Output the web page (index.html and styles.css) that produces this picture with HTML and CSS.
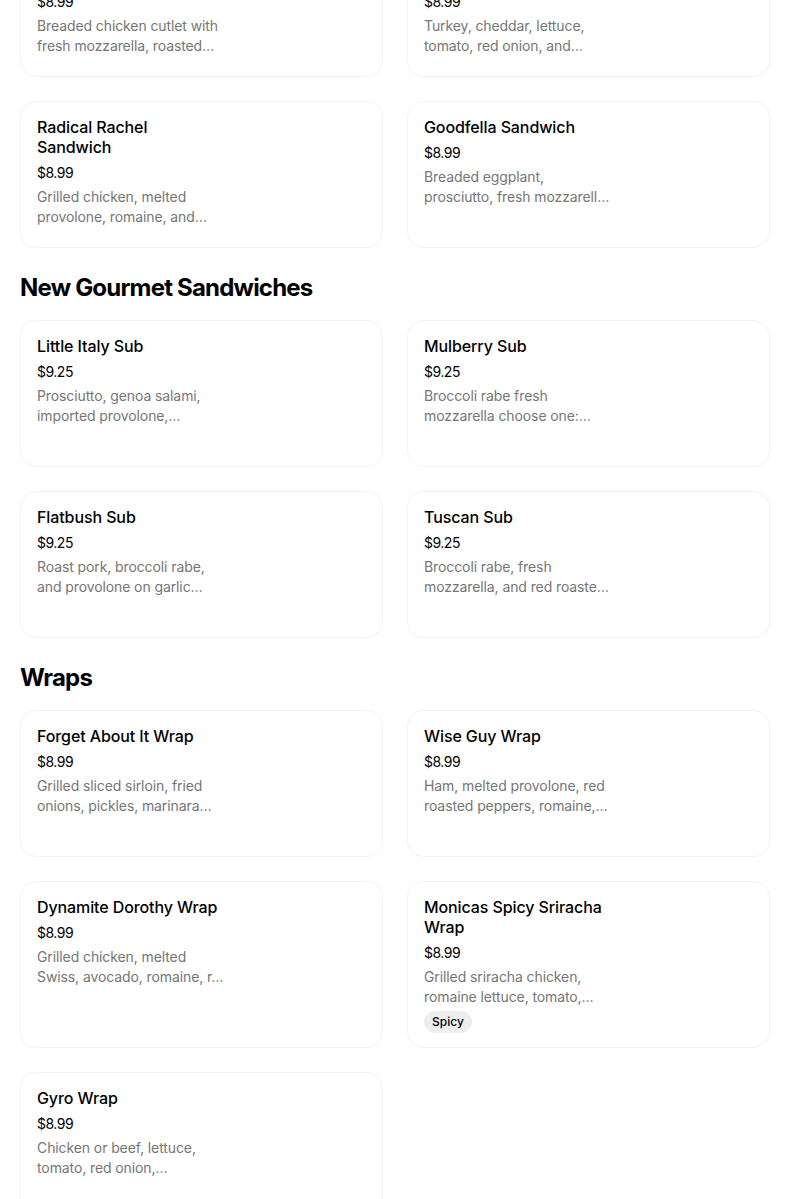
FILE: index.html
```html
<!DOCTYPE html>
<html lang="en">
<head>
<meta charset="utf-8">
<title>Menu</title>
<link rel="stylesheet" href="styles.css">
</head>
<body>
<main class="menu">
  <section class="category">
    <div class="grid">
      <article class="card">
        <div class="info">
          <h3 class="title">Chicken Cutlet Parm Sandwich</h3>
          <div class="price">$8.99</div>
          <p class="desc">Breaded chicken cutlet with fresh mozzarella, roasted…</p>
        </div>
      </article>
      <article class="card">
        <div class="info">
          <h3 class="title">Turkey Club Deluxe Sandwich</h3>
          <div class="price">$8.99</div>
          <p class="desc">Turkey, cheddar, lettuce, tomato, red onion, and…</p>
        </div>
      </article>
      <article class="card">
        <div class="info">
          <h3 class="title">Radical Rachel Sandwich</h3>
          <div class="price">$8.99</div>
          <p class="desc">Grilled chicken, melted provolone, romaine, and…</p>
        </div>
      </article>
      <article class="card">
        <div class="info">
          <h3 class="title">Goodfella Sandwich</h3>
          <div class="price">$8.99</div>
          <p class="desc">Breaded eggplant, prosciutto, fresh mozzarell…</p>
        </div>
      </article>
    </div>
  </section>

  <section class="category">
    <h2 class="cat-title">New Gourmet Sandwiches</h2>
    <div class="grid">
      <article class="card">
        <div class="info">
          <h3 class="title">Little Italy Sub</h3>
          <div class="price">$9.25</div>
          <p class="desc">Prosciutto, genoa salami, imported provolone,…</p>
        </div>
      </article>
      <article class="card">
        <div class="info">
          <h3 class="title">Mulberry Sub</h3>
          <div class="price">$9.25</div>
          <p class="desc">Broccoli rabe fresh mozzarella choose one:…</p>
        </div>
      </article>
      <article class="card">
        <div class="info">
          <h3 class="title">Flatbush Sub</h3>
          <div class="price">$9.25</div>
          <p class="desc">Roast pork, broccoli rabe, and provolone on garlic…</p>
        </div>
      </article>
      <article class="card">
        <div class="info">
          <h3 class="title">Tuscan Sub</h3>
          <div class="price">$9.25</div>
          <p class="desc">Broccoli rabe, fresh mozzarella, and red roaste…</p>
        </div>
      </article>
    </div>
  </section>

  <section class="category">
    <h2 class="cat-title">Wraps</h2>
    <div class="grid">
      <article class="card">
        <div class="info">
          <h3 class="title">Forget About It Wrap</h3>
          <div class="price">$8.99</div>
          <p class="desc">Grilled sliced sirloin, fried onions, pickles, marinara…</p>
        </div>
      </article>
      <article class="card">
        <div class="info">
          <h3 class="title">Wise Guy Wrap</h3>
          <div class="price">$8.99</div>
          <p class="desc">Ham, melted provolone, red roasted peppers, romaine,…</p>
        </div>
      </article>
      <article class="card">
        <div class="info">
          <h3 class="title">Dynamite Dorothy Wrap</h3>
          <div class="price">$8.99</div>
          <p class="desc">Grilled chicken, melted Swiss, avocado, romaine, r…</p>
        </div>
      </article>
      <article class="card">
        <div class="info">
          <h3 class="title">Monicas Spicy Sriracha Wrap</h3>
          <div class="price">$8.99</div>
          <p class="desc">Grilled sriracha chicken, romaine lettuce, tomato,…</p>
          <span class="tag">Spicy</span>
        </div>
      </article>
      <article class="card">
        <div class="info">
          <h3 class="title">Gyro Wrap</h3>
          <div class="price">$8.99</div>
          <p class="desc">Chicken or beef, lettuce, tomato, red onion,…</p>
        </div>
      </article>
    </div>
  </section>
</main>
</body>
</html>
```

FILE: styles.css
```css
* {
  box-sizing: border-box;
}

html, body {
  margin: 0;
  padding: 0;
  background: #ffffff;
}

body {
  font-family: Inter, "Noto Sans", "Liberation Sans", sans-serif;
  color: #000000;
  overflow: hidden;
}

.menu {
  width: 750px;
  margin: -70px 0 0 20px;
}

.category + .category {
  margin-top: 24px;
}

.cat-title {
  margin: 0 0 16px;
  font-size: 24px;
  line-height: 32px;
  font-weight: 700;
  letter-spacing: -0.8px;
}

.grid {
  display: grid;
  grid-template-columns: 363px 363px;
  gap: 24px;
}

.card {
  min-height: 147px;
  border: 1px solid #f3f3f3;
  border-radius: 16px;
  padding: 15px 16px 14px;
  display: flex;
}

.info {
  width: 190px;
  display: flex;
  flex-direction: column;
  align-items: flex-start;
}

.title {
  margin: 0;
  max-width: 182px;
  font-size: 16px;
  line-height: 20px;
  font-weight: 500;
  letter-spacing: -0.1px;
}

.price {
  margin-top: 6px;
  font-size: 14px;
  line-height: 20px;
  color: #000000;
  letter-spacing: -0.5px;
}

.desc {
  margin: 4px 0 0;
  max-height: 40px;
  overflow: hidden;
  font-size: 14px;
  line-height: 20px;
  color: #767676;
  letter-spacing: -0.1px;
}

.tag {
  margin-top: 4px;
  height: 22px;
  padding: 0 8px;
  border-radius: 11px;
  background: #eeeeee;
  font-size: 12px;
  line-height: 22px;
  font-weight: 500;
  color: #000000;
}
```
